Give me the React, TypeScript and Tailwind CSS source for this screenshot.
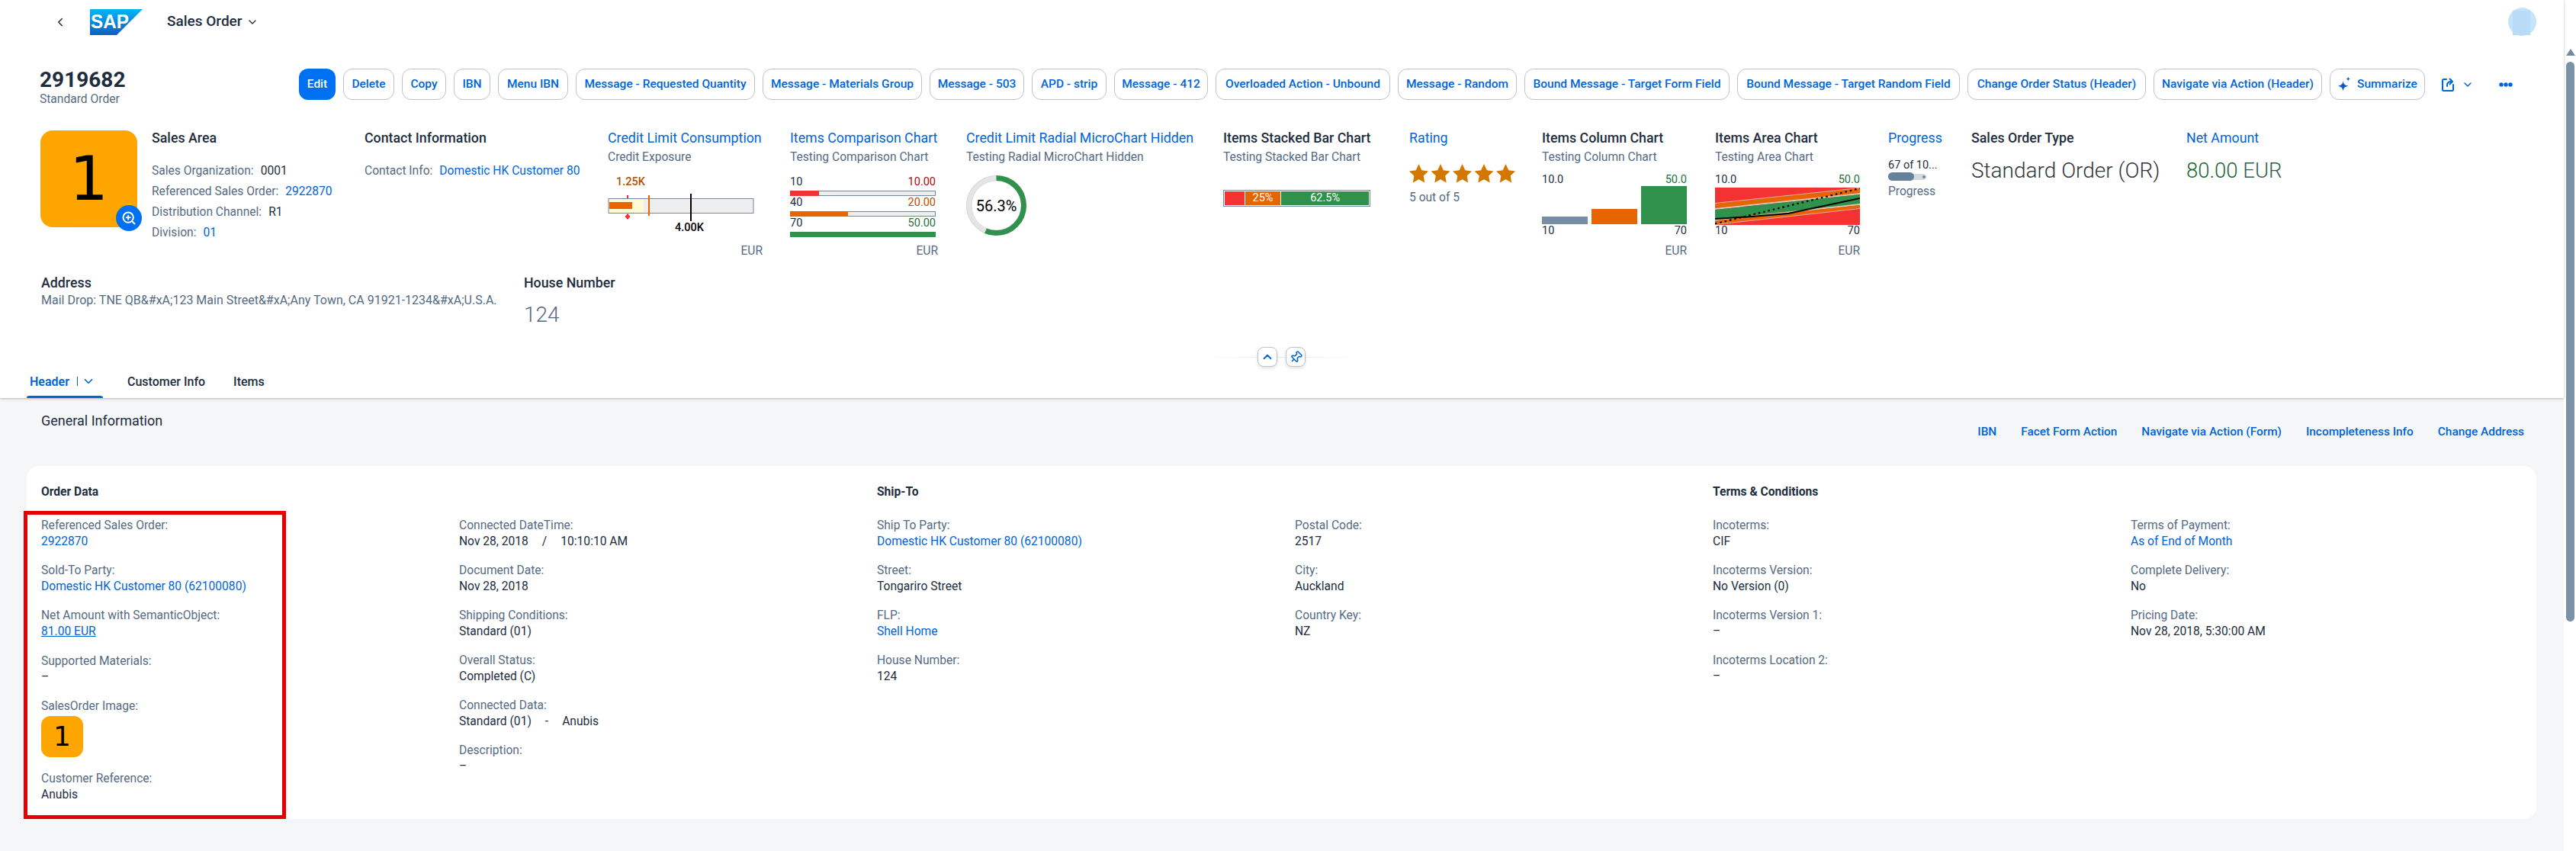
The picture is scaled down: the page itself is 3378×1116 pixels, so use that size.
import { ChevronDown, ChevronLeft, ChevronUp, Pin, ZoomIn } from "lucide-react";
import type { ReactNode } from "react";

const buttons = [
  { t: "Delete", w: "w-[67px]" },
  { t: "Copy", w: "w-[58px]" },
  { t: "IBN", w: "w-[48px]" },
  { t: "Menu IBN", w: "w-[92px]" },
  { t: "Message - Requested Quantity", w: "w-[235px]" },
  { t: "Message - Materials Group", w: "w-[209px]" },
  { t: "Message - 503", w: "w-[124px]" },
  { t: "APD - strip", w: "w-[98px]" },
  { t: "Message - 412", w: "w-[123px]" },
  { t: "Overloaded Action - Unbound", w: "w-[229px]" },
  { t: "Message - Random", w: "w-[156px]" },
  { t: "Bound Message - Target Form Field", w: "w-[269px]" },
  { t: "Bound Message - Target Random Field", w: "w-[292px]" },
  { t: "Change Order Status (Header)", w: "w-[234px]" },
  { t: "Navigate via Action (Header)", w: "w-[221px]" },
];

function Title({ children, link }: { children: ReactNode; link?: boolean }) {
  return (
    <div className={link ? "h-5 leading-5 text-[17.8px] whitespace-nowrap text-[#0064d9]" : "h-5 leading-5 text-[17.8px] font-medium whitespace-nowrap text-[#1d2d3e]"}>
      {children}
    </div>
  );
}

function Sub({ children }: { children: ReactNode }) {
  return <div className="mt-[5px] h-5 leading-5 text-[15.6px] whitespace-nowrap text-[#556b82]">{children}</div>;
}

function Eur({ w }: { w: string }) {
  return <div className={`${w} h-5 leading-5 text-right text-[15.6px] text-[#556b82]`}>EUR</div>;
}

function KV({ k, children }: { k: string; children: ReactNode }) {
  return (
    <div className="flex h-[27px] items-center gap-[9px] whitespace-nowrap text-[15.6px]">
      <span className="text-[#556b82]">{k}</span>
      {children}
    </div>
  );
}

function Field({ label, children, h = "h-[22px]" }: { label: string; children?: ReactNode; h?: string }) {
  return (
    <div className="mb-4">
      <div className="h-[21px] leading-[22px] text-[#556b82]">{label}</div>
      <div className={`${h} leading-[22px] whitespace-nowrap text-[#1d2d3e]`}>{children}</div>
    </div>
  );
}

const L = ({ children }: { children: ReactNode }) => <span className="text-[#0064d9]">{children}</span>;

function Comparison({ label, value, vc, fill, width }: { label: string; value: string; vc: string; fill: string; width: string }) {
  return (
    <>
      <div className="flex h-[18px] w-[191px] items-center justify-between text-[14.5px] leading-[18px] text-[#1d2d3e]">
        <span>{label}</span>
        <span className={vc}>{value}</span>
      </div>
      <div className="mt-[2px] h-[7px] w-[191px] border border-[#7488a0] bg-[#eeeeee]">
        <div className={`-m-px h-[7px] ${fill} ${width}`} />
      </div>
    </>
  );
}

function Star({ x }: { x: number }) {
  const pts = "12.5,0 16.3,8.2 25,9.4 18.7,15.6 20.2,24.5 12.5,20.2 4.8,24.5 6.3,15.6 0,9.4 8.7,8.2";
  return <polygon points={pts} transform={`translate(${x} 0)`} fill="#d27700" />;
}

export default function App() {
  return (
    <div className="flex h-[1116px] w-[3378px] overflow-hidden bg-white [font-family:Roboto,sans-serif] text-[15.6px] text-[#1d2d3e]">
      <div className="flex w-[3362px] flex-col bg-[#f5f6f7]">
        <header className="relative z-10 h-[522px] bg-white shadow-[0_1px_3px_rgba(0,0,0,0.25)]">
          {/* Shell bar */}
          <div className="flex h-[57px] items-center">
            <ChevronLeft className="ml-[70px] h-[18px] w-[18px] text-[#1d2d3e]" strokeWidth={2} />
            <svg className="ml-[30px]" width="69" height="34" viewBox="0 0 69 34">
              <defs>
                <linearGradient id="sapg" x1="0" y1="0" x2="0" y2="1">
                  <stop offset="0" stopColor="#00b8f1" />
                  <stop offset="0.6" stopColor="#0a7fd6" />
                  <stop offset="1" stopColor="#1160b8" />
                </linearGradient>
              </defs>
              <polygon points="0,0 69,0 35,34 0,34" fill="url(#sapg)" />
              <text x="1" y="25" fill="#fff" fontFamily="Liberation Sans" fontWeight="700" fontSize="25" textLength="50" lengthAdjust="spacingAndGlyphs">SAP</text>
            </svg>
            <span className="ml-8 text-[19px] font-medium whitespace-nowrap">Sales Order</span>
            <ChevronDown className="ml-[5px] h-4 w-4" strokeWidth={2} />
            <div className="relative ml-auto mr-9 h-[37px] w-[37px] rounded-full bg-[#c4e4fb]">
              <div className="absolute left-[6px] top-[4px] h-[32px] w-[23px] bg-[#b8dcf8]" />
            </div>
          </div>

          {/* Title row */}
          <div className="mt-[33px] flex h-[81px] items-start pl-[52px]">
            <div className="w-[340px]">
              <div className="h-[30px] leading-[30px] text-[28px] font-bold text-[#1d2d3e]">2919682</div>
              <div className="h-5 leading-5 text-[15.6px] text-[#556b82]">Standard Order</div>
            </div>
            <div className="flex items-center gap-[10px]">
              <button className="h-[41px] w-[48px] rounded-xl bg-[#0070f2] text-[15.5px] font-medium text-white">Edit</button>
              {buttons.map((b) => (
                <button key={b.t} className={`${b.w} h-[41px] whitespace-nowrap rounded-xl border border-[#bcc3ca] bg-white text-[15.5px] font-medium text-[#0064d9]`}>
                  {b.t}
                </button>
              ))}
              <button className="flex h-[41px] w-[125px] items-center justify-center gap-[7px] rounded-xl border border-[#bcc3ca] bg-white text-[15.5px] font-medium text-[#0064d9]">
                <svg width="19" height="24" viewBox="0 0 20 24" fill="#0a5bc8">
                  <path d="M8 7c.6 4 2 5.8 7 6.8-5 1-6.4 3-7 7.2-.6-4.2-2-6.200-7-7.200 5-1 6.400-2.800 7-6.800z" />
                  <path d="M15 1c.3 2 1 2.800 3 3.200-2 .4-2.700 1.200-3 3.200-.3-2-1-2.800-3-3.200 2-.4 2.700-1.200 3-3.200z" />
                </svg>
                Summarize
              </button>
              <svg className="ml-[12px]" width="17" height="18" viewBox="0 0 17 18" fill="none" stroke="#0064d9" strokeWidth="2" strokeLinecap="round" strokeLinejoin="round">
                <path d="M6 2H2.500a1.500 1.500 0 0 0-1.500 1.500v12A1.500 1.500 0 0 0 2.500 17h11a1.500 1.500 0 0 0 1.500-1.500V9" />
                <path d="M7 11V9.500C7 7 9 5 12.500 5" />
                <path d="M10.500 1.500L14 5l-3.500 3.500" />
              </svg>
              <ChevronDown className="-ml-[1px] h-[16px] w-[16px] text-[#0064d9]" strokeWidth={2.2} />
              <svg className="ml-[23px]" width="18" height="6" viewBox="0 0 18 6" fill="#0064d9">
                <circle cx="3" cy="3" r="2.700" />
                <circle cx="9" cy="3" r="2.700" />
                <circle cx="15" cy="3" r="2.700" />
              </svg>
            </div>
          </div>

          {/* KPI row */}
          <div className="flex h-[190px] items-start pl-[53px]">
            <div className="w-[146px]">
              <div className="relative flex h-[127px] w-[127px] items-center justify-center rounded-2xl bg-[#ffa500] [font-family:'DejaVu_Sans',sans-serif] text-[80px] leading-none text-black">
                1
                <div className="absolute -bottom-[5px] -right-[6px] flex h-[34px] w-[34px] items-center justify-center rounded-full bg-[#0070f2]">
                  <ZoomIn className="h-5 w-5 text-white" strokeWidth={2.4} />
                </div>
              </div>
            </div>

            <div className="w-[279px]">
              <Title>Sales Area</Title>
              <div className="mt-5">
                <KV k="Sales Organization:"><span>0001</span></KV>
                <KV k="Referenced Sales Order:"><L>2922870</L></KV>
                <KV k="Distribution Channel:"><span>R1</span></KV>
                <KV k="Division:"><L>01</L></KV>
              </div>
            </div>

            <div className="w-[319px]">
              <Title>Contact Information</Title>
              <div className="mt-5">
                <KV k="Contact Info:"><L>Domestic HK Customer 80</L></KV>
              </div>
            </div>

            <div className="w-[239px]">
              <Title link>Credit Limit Consumption</Title>
              <Sub>Credit Exposure</Sub>
              <div className="mt-[13px] h-5 pl-[11px] text-[14.5px] font-medium leading-5 text-[#b44f00]">1.25K</div>
              <svg className="block" width="203" height="41" viewBox="0 0 203 41">
                <rect x="1" y="11.500" width="190" height="19" fill="#eeeeee" stroke="#7488a0" />
                <rect x="2" y="12" width="45" height="18" fill="#fff8d6" />
                <rect x="2" y="16" width="30" height="9" fill="#e76500" />
                <rect x="25" y="7" width="2" height="4" fill="#f53232" />
                <polygon points="26,31 29.500,35 26,39 22.500,35" fill="#f53232" />
                <rect x="53" y="7" width="2" height="27" fill="#e76500" />
                <rect x="108" y="5" width="2" height="36" fill="#000" />
              </svg>
              <div className="-mt-px h-5 w-[203px] pl-[88px] text-[14.5px] font-medium leading-5 text-black">4.00K</div>
              <div className="mt-[10px]"><Eur w="w-[203px]" /></div>
            </div>

            <div className="w-[231px]">
              <Title link>Items Comparison Chart</Title>
              <Sub>Testing Comparison Chart</Sub>
              <div className="mt-[14px]">
                <Comparison label="10" value="10.00" vc="text-[#aa0808]" fill="bg-[#f53232]" width="w-[38px]" />
                <Comparison label="40" value="20.00" vc="text-[#b44f00]" fill="bg-[#e76500]" width="w-[76px]" />
                <Comparison label="70" value="50.00" vc="text-[#256f3a]" fill="bg-[#30914c]" width="w-[191px]" />
              </div>
              <div className="mt-2"><Eur w="w-[194px]" /></div>
            </div>

            <div className="w-[337px]">
              <Title link>Credit Limit Radial MicroChart Hidden</Title>
              <Sub>Testing Radial MicroChart Hidden</Sub>
              <svg className="mt-[14px] block" width="79" height="79" viewBox="0 0 79 79">
                <circle cx="39.500" cy="39.500" r="36" fill="none" stroke="#e5e5e5" strokeWidth="7" />
                <circle cx="39.500" cy="39.500" r="39" fill="none" stroke="#c9cfd5" strokeWidth="0.6" />
                <circle cx="39.500" cy="39.500" r="32.500" fill="none" stroke="#c9cfd5" strokeWidth="0.6" />
                <circle cx="39.500" cy="39.500" r="36" fill="none" stroke="#30914c" strokeWidth="7" strokeDasharray="127.300 226.200" transform="rotate(-90 39.500 39.500)" />
                <text x="39.500" y="46.500" textAnchor="middle" fontSize="20" fill="#000">56.3%</text>
              </svg>
            </div>

            <div className="w-[244px]">
              <Title>Items Stacked Bar Chart</Title>
              <Sub>Testing Stacked Bar Chart</Sub>
              <div className="mt-[33px] flex h-[22px] w-[193px] gap-px border border-[#7488a0] p-px text-[14.5px] leading-[18px] text-white">
                <div className="w-[26px] bg-[#f53232]" />
                <div className="w-[47px] bg-[#e76500] text-center">25%</div>
                <div className="w-[116px] bg-[#30914c] text-center">62.5%</div>
              </div>
            </div>

            <div className="w-[174px]">
              <Title link>Rating</Title>
              <svg className="mt-6 block" width="140" height="25" viewBox="0 0 140 25">
                {[0, 28.5, 57, 85.5, 114].map((x) => <Star key={x} x={x} />)}
              </svg>
              <div className="mt-[9px] h-5 leading-5 text-[#556b82]">5 out of 5</div>
            </div>

            <div className="w-[227px]">
              <Title>Items Column Chart</Title>
              <Sub>Testing Column Chart</Sub>
              <div className="mt-[11px] flex h-[18px] w-[190px] justify-between text-[14.5px] leading-[18px]">
                <span>10.0</span>
                <span className="text-[#256f3a]">50.0</span>
              </div>
              <div className="-mt-px flex h-[50px] w-[190px] items-end gap-[5px]">
                <div className="h-[10px] w-[60px] bg-[#768da4]" />
                <div className="h-[20px] w-[60px] bg-[#e76500]" />
                <div className="h-[50px] w-[60px] bg-[#30914c]" />
              </div>
              <div className="flex h-4 w-[190px] justify-between text-[14.5px] leading-[17px]">
                <span>10</span>
                <span>70</span>
              </div>
              <div className="mt-[9px]"><Eur w="w-[190px]" /></div>
            </div>

            <div className="w-[227px]">
              <Title>Items Area Chart</Title>
              <Sub>Testing Area Chart</Sub>
              <div className="mt-[11px] flex h-[18px] w-[190px] justify-between text-[14.5px] leading-[18px]">
                <span>10.0</span>
                <span className="text-[#256f3a]">50.0</span>
              </div>
              <svg className="mt-px block" width="190" height="49" viewBox="0 0 190 49">
                <rect width="190" height="49" fill="#f53232" />
                <polygon points="0,21 190,1 190,7 0,27" fill="#e76500" />
                <polygon points="0,27 190,7 190,9 0,29" fill="#d8c8b4" />
                <polygon points="0,29 190,9 190,21 0,42" fill="#30914c" />
                <polygon points="0,42 190,21 190,23 0,43.500" fill="#d8c8b4" />
                <polygon points="0,43.500 190,23 190,27 0,48" fill="#e76500" />
                <line x1="0" y1="48.500" x2="190" y2="27.500" stroke="#e8b0a0" strokeWidth="1" />
                <line x1="0" y1="20.500" x2="190" y2="0.500" stroke="#e8b0a0" strokeWidth="1" />
                <polyline points="0,41 48,38 96,34 190,14" fill="none" stroke="#000" strokeWidth="2" />
                <line x1="0" y1="47.500" x2="190" y2="1" stroke="#000" strokeWidth="2.200" strokeDasharray="2.500 4" />
              </svg>
              <div className="flex h-[14px] w-[190px] justify-between text-[14.5px] leading-[15px]">
                <span>10</span>
                <span>70</span>
              </div>
              <div className="mt-[10px]"><Eur w="w-[190px]" /></div>
            </div>

            <div className="w-[109px]">
              <Title link>Progress</Title>
              <div className="mt-[17px] h-[18px] text-[14.5px] leading-[18px] whitespace-nowrap">67 of 10...</div>
              <div className="relative h-[11px] w-[50px]">
                <div className="absolute inset-x-0 top-[2px] h-[8px] rounded-full bg-[#d5dadd]" />
                <div className="absolute left-0 top-0 h-[11px] w-[34px] rounded-full bg-[#64809b]" />
                <div className="absolute left-[45px] top-[4px] h-[4px] w-[4px] rounded-full bg-[#7488a0]" />
              </div>
              <div className="mt-1 h-5 leading-5 text-[#556b82]">Progress</div>
            </div>

            <div className="w-[282px]">
              <Title>Sales Order Type</Title>
              <div className="mt-[15px] h-9 text-[28px] font-light leading-9 whitespace-nowrap text-[#32363a]">Standard Order (OR)</div>
            </div>

            <div>
              <Title link>Net Amount</Title>
              <div className="mt-[15px] h-9 text-[27.5px] font-light leading-9 whitespace-nowrap">
                <span className="text-[#1a6630]">80.00</span> <span className="text-[#2f5f48]">EUR</span>
              </div>
            </div>
          </div>

          {/* Second row */}
          <div className="flex h-[94px] items-start pl-[54px]">
            <div className="w-[633px]">
              <Title>Address</Title>
              <div className="mt-[3px] h-5 leading-5 text-[16px] whitespace-nowrap text-[#556b82]">
                Mail Drop: TNE QB&amp;#xA;123 Main Street&amp;#xA;Any Town, CA 91921-1234&amp;#xA;U.S.A.
              </div>
            </div>
            <div>
              <Title>House Number</Title>
              <div className="mt-[14px] h-9 text-[28px] font-light leading-9 text-[#556b82]">124</div>
            </div>
          </div>

          {/* Collapse row */}
          <div className="relative flex h-[26px] justify-start pl-[1649px]">
            <div className="absolute left-[1580px] top-[13px] h-px w-[200px] bg-gradient-to-r from-transparent via-[#e5e7ea] to-transparent" />
            <button className="relative z-10 flex h-[26px] w-[26px] items-center justify-center rounded-lg border border-[#bcc3ca] bg-white shadow-[0_2px_4px_rgba(0,0,0,0.12)]">
              <ChevronUp className="h-[18px] w-[18px] text-[#0064d9]" strokeWidth={2.4} />
            </button>
            <button className="relative z-10 ml-[11px] flex h-[26px] w-[26px] items-center justify-center rounded-lg border border-[#bcc3ca] bg-white shadow-[0_2px_4px_rgba(0,0,0,0.12)]">
              <Pin className="h-[17px] w-[17px] rotate-45 text-[#0064d9]" strokeWidth={2.2} />
            </button>
          </div>

          {/* Tabs */}
          <nav className="flex h-[41px] items-start pl-[35px] pt-[7px] text-[16px] font-medium">
            <div className="relative flex h-[34px] w-[100px] items-start pl-1 pt-px text-[#0064d9]">
              <span className="font-semibold">Header</span>
              <span className="ml-[10px] mt-[5px] h-[12px] w-px bg-[#0064d9]" />
              <ChevronDown className="ml-[5px] mt-[2px] h-[18px] w-[18px]" strokeWidth={2.2} />
              <div className="absolute bottom-0 left-0 h-[3px] w-[100px] rounded-t bg-[#0064d9]" />
            </div>
            <span className="ml-8 pt-px">Customer Info</span>
            <span className="ml-[37px] pt-px">Items</span>
          </nav>
        </header>

        {/* Body */}
        <main className="relative pl-[35px] pr-[36px]">
          <div className="flex h-[89px] items-start justify-between">
            <div className="mt-[19px] pl-[19px] text-[18px] leading-[22px] text-[#1d2d3e]">General Information</div>
            <div className="mt-[34px] flex gap-8 pr-4 text-[15.4px] font-medium leading-5 text-[#0064d9]">
              <span>IBN</span>
              <span>Facet Form Action</span>
              <span>Navigate via Action (Form)</span>
              <span>Incompleteness Info</span>
              <span>Change Address</span>
            </div>
          </div>

          <section className="h-[463px] rounded-2xl bg-white pl-[19px] pt-6">
            <div className="grid w-[3288px] grid-cols-6">
              <div className="col-span-2 h-[43px] font-bold leading-5">Order Data</div>
              <div className="col-span-2 h-[43px] font-bold leading-5">Ship-To</div>
              <div className="col-span-2 h-[43px] font-bold leading-5">Terms &amp; Conditions</div>

              <div>
                <Field label="Referenced Sales Order:"><L>2922870</L></Field>
                <Field label="Sold-To Party:"><L>Domestic HK Customer 80 (62100080)</L></Field>
                <Field label="Net Amount with SemanticObject:" h="h-[23px]"><span className="text-[#0064d9] underline">81.00 EUR</span></Field>
                <Field label="Supported Materials:">–</Field>
                <div className="h-[95px]">
                  <div className="h-[21px] leading-[22px] text-[#556b82]">SalesOrder Image:</div>
                  <div className="mt-[3px] flex h-[54px] w-[55px] items-center justify-center rounded-xl bg-[#ffa500] [font-family:'DejaVu_Sans',sans-serif] text-[36px] leading-none text-black">1</div>
                </div>
                <Field label="Customer Reference:">Anubis</Field>
              </div>
              <div>
                <Field label="Connected DateTime:">Nov 28, 2018<span className="mx-[18px]">/</span>10:10:10 AM</Field>
                <Field label="Document Date:">Nov 28, 2018</Field>
                <Field label="Shipping Conditions:">Standard (01)</Field>
                <Field label="Overall Status:">Completed (C)</Field>
                <Field label="Connected Data:">Standard (01)<span className="mx-[18px]">-</span>Anubis</Field>
                <Field label="Description:">–</Field>
              </div>
              <div>
                <Field label="Ship To Party:"><L>Domestic HK Customer 80 (62100080)</L></Field>
                <Field label="Street:">Tongariro Street</Field>
                <Field label="FLP:"><L>Shell Home</L></Field>
                <Field label="House Number:">124</Field>
              </div>
              <div>
                <Field label="Postal Code:">2517</Field>
                <Field label="City:">Auckland</Field>
                <Field label="Country Key:">NZ</Field>
              </div>
              <div>
                <Field label="Incoterms:">CIF</Field>
                <Field label="Incoterms Version:">No Version (0)</Field>
                <Field label="Incoterms Version 1:">–</Field>
                <Field label="Incoterms Location 2:">–</Field>
              </div>
              <div>
                <Field label="Terms of Payment:"><L>As of End of Month</L></Field>
                <Field label="Complete Delivery:">No</Field>
                <Field label="Pricing Date:">Nov 28, 2018, 5:30:00 AM</Field>
              </div>
            </div>
          </section>

          {/* Red annotation box */}
          <div className="absolute left-[31px] top-[148px] h-[404px] w-[344px] border-[5px] border-[#e60000]" />
        </main>
      </div>

      {/* Scrollbar */}
      <div className="relative w-4 bg-white pl-[3px] pt-[64px]">
        <div className="h-0 w-0 border-x-[6px] border-b-[9px] border-x-transparent border-b-[#7488a0]" />
        <div className="mt-2 h-[734px] w-[11px] rounded-full bg-[#7b91a8]" />
      </div>
    </div>
  );
}
